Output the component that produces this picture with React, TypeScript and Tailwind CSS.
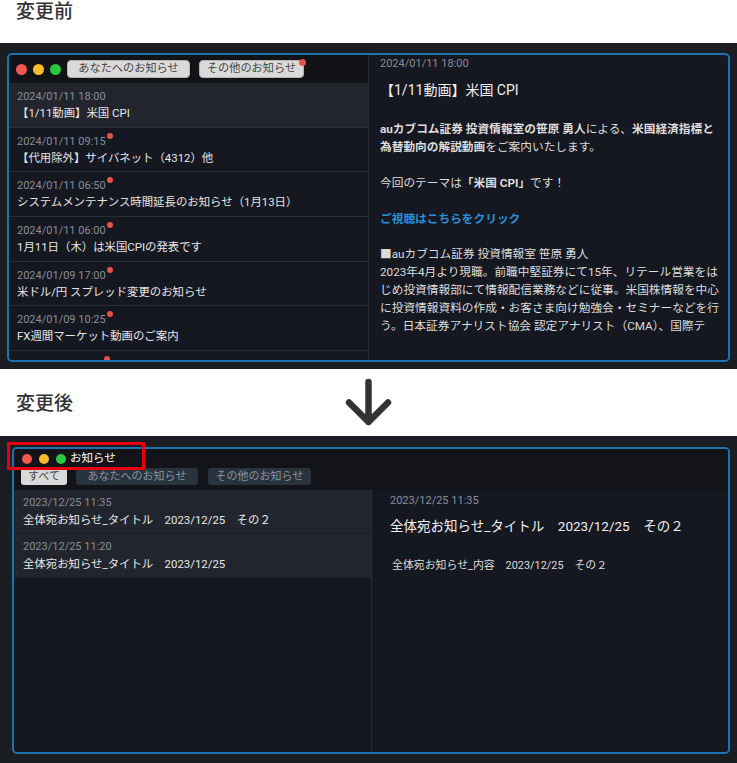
const list1 = [
  { d: "2024/01/11 18:00", t: "【1/11動画】米国 CPI", dot: false, sel: true },
  { d: "2024/01/11 09:15", t: "【代用除外】サイバネット（4312）他", dot: true },
  { d: "2024/01/11 06:50", t: "システムメンテナンス時間延長のお知らせ（1月13日）", dot: true },
  { d: "2024/01/11 06:00", t: "1月11日（木）は米国CPIの発表です", dot: true },
  { d: "2024/01/09 17:00", t: "米ドル/円 スプレッド変更のお知らせ", dot: true },
  { d: "2024/01/09 10:25", t: "FX週間マーケット動画のご案内", dot: true },
  { d: "", t: "", dot: true },
];

const list2 = [
  { d: "2023/12/25 11:35", t: "全体宛お知らせ_タイトル　2023/12/25　その２" },
  { d: "2023/12/25 11:20", t: "全体宛お知らせ_タイトル　2023/12/25" },
];

function Lights({ size, gap }: { size: string; gap: string }) {
  return (
    <div className={`flex items-center ${gap}`}>
      <span className={`${size} rounded-full bg-[#f0574f]`} />
      <span className={`${size} rounded-full bg-[#f7bb2c]`} />
      <span className={`${size} rounded-full bg-[#2ac840]`} />
    </div>
  );
}

export default function App() {
  return (
    <div className="w-[737px] h-[763px] overflow-hidden bg-white [font-family:Roboto,'Noto_Sans_CJK_JP',sans-serif]">
      {/* heading 1 */}
      <div className="h-[43px] pl-4">
        <div className="text-[19px] leading-[24px] font-medium text-[#333]">変更前</div>
      </div>

      {/* band 1 */}
      <div className="h-[326px] bg-[#1a1e23] px-[7px] pt-[10px]">
        <div className="flex h-[309px] rounded-[5px] border-2 border-[#1f72b0] bg-[#161821] overflow-hidden">
          {/* left column */}
          <div className="w-[360px] shrink-0 flex flex-col border-r border-[#2a2e37]">
            <div className="h-[28px] shrink-0 bg-[#121317] flex items-center pl-[7px]">
              <Lights size="w-[11px] h-[11px]" gap="gap-[6px]" />
              <div className="ml-[6px] flex items-center gap-[9px]">
                <div className="w-[123px] h-[18px] rounded-[4px] bg-[#dadada] border border-[#b5b5b5] flex items-center justify-center text-[11.2px] text-[#444] leading-none">
                  あなたへのお知らせ
                </div>
                <div className="relative w-[105px] h-[18px] rounded-[4px] bg-[#dadada] border border-[#b5b5b5] flex items-center justify-center text-[11.2px] text-[#444] leading-none">
                  その他のお知らせ
                  <span className="absolute -top-[2.5px] -right-[2.5px] w-[7px] h-[7px] rounded-full bg-[#e5534b]" />
                </div>
              </div>
            </div>
            <div className="flex-1 overflow-hidden">
              {list1.map((r, i) => (
                <div
                  key={i}
                  className={`h-[44.67px] pl-2 pt-[6px] border-b border-[#2a2e37] ${r.sel ? "bg-[#22252d]" : ""}`}
                >
                  <div className="h-[16px] leading-[16px] text-[11px] text-[#878d97] flex items-start">
                    {r.d ? <span>{r.d}</span> : <span className="w-[86px]" />}
                    {r.dot && <span className="ml-[1px] mt-[-1px] w-[6px] h-[6px] rounded-full bg-[#e5534b]" />}
                  </div>
                  <div className="h-[16px] leading-[16px] text-[11.4px] text-[#e6e6e6] whitespace-nowrap">{r.t}</div>
                </div>
              ))}
            </div>
          </div>
          {/* right column */}
          <div className="flex-1 pl-[11px] pr-3 overflow-hidden text-[#dcdcdc]">
            <div className="h-[18px] leading-[18px] text-[11px] text-[#878d97]">2024/01/11 18:00</div>
            <div className="mt-[7px] h-[20px] leading-[20px] text-[14px] text-[#eeeeee]">【1/11動画】米国 CPI</div>
            <div className="mt-[21px] text-[11.7px] leading-[17.9px] whitespace-nowrap">
              <div>
                <b className="font-bold">auカブコム証券 投資情報室の笹原 勇人</b>による、<b className="font-bold">米国経済指標と</b>
              </div>
              <div>
                <b className="font-bold">為替動向の解説動画</b>をご案内いたします。
              </div>
              <div>&nbsp;</div>
              <div>
                今回のテーマは<b className="font-bold">「米国 CPI」</b>です！
              </div>
              <div>&nbsp;</div>
              <div className="font-bold text-[#2a8fd8]">ご視聴はこちらをクリック</div>
              <div>&nbsp;</div>
              <div>■auカブコム証券 投資情報室 笹原 勇人</div>
              <div>2023年4月より現職。前職中堅証券にて15年、リテール営業をは</div>
              <div>じめ投資情報部にて情報配信業務などに従事。米国株情報を中心</div>
              <div>に投資情報資料の作成・お客さま向け勉強会・セミナーなどを行</div>
              <div>う。日本証券アナリスト協会 認定アナリスト（CMA）、国際テ</div>
            </div>
          </div>
        </div>
      </div>

      {/* middle */}
      <div className="h-[67px] bg-white grid grid-cols-[1fr_48px_1fr]">
        <div className="pl-4 pt-[23px]">
          <div className="text-[19px] leading-[24px] font-medium text-[#333]">変更後</div>
        </div>
        <div className="pt-[9px]">
          <svg width="48" height="50" viewBox="0 0 48 50" fill="none">
            <path
              d="M23.5 4 V44 M4 24.5 L23.5 44 L43 24.5"
              stroke="#333"
              strokeWidth="6.5"
              strokeLinecap="round"
              strokeLinejoin="round"
            />
          </svg>
        </div>
        <div />
      </div>

      {/* band 2 */}
      <div className="relative h-[327px] bg-[#1a1e23] pl-[12px] pr-[7px] pt-[11px]">
        <div className="flex flex-col h-[307px] rounded-[5px] border-2 border-[#1f72b0] bg-[#161821] overflow-hidden">
          <div className="shrink-0 bg-[#131419] pb-[5px]">
            <div className="h-[19px] flex items-center pl-[8px]">
              <Lights size="w-[10px] h-[10px]" gap="gap-[7px]" />
              <span className="ml-[4px] text-[11.5px] leading-none text-white">お知らせ</span>
            </div>
            <div className="h-[17px] flex items-center pl-[7px] gap-[9px]">
              <div className="w-[46px] h-[17px] rounded-[3px] bg-[#d9d9d9] flex items-center justify-center text-[11px] text-[#444] leading-none">
                すべて
              </div>
              <div className="w-[122px] h-[17px] rounded-[3px] bg-[#29333e] flex items-center justify-center text-[11px] text-[#8a939e] leading-none">
                あなたへのお知らせ
              </div>
              <div className="ml-[1px] w-[103px] h-[17px] rounded-[3px] bg-[#29333e] flex items-center justify-center text-[11px] text-[#8a939e] leading-none">
                その他のお知らせ
              </div>
            </div>
          </div>
          <div className="flex flex-1">
            <div className="w-[358px] shrink-0 border-r border-[#2a2e37]">
              {list2.map((r, i) => (
                <div key={i} className="h-[44px] pl-[9px] pt-[5px] bg-[#22252d] border-b border-[#1b1d24]">
                  <div className="h-[16px] leading-[16px] text-[11px] text-[#878d97]">{r.d}</div>
                  <div className="h-[18px] leading-[18px] text-[11.4px] text-[#e8e8e8] whitespace-nowrap">{r.t}</div>
                </div>
              ))}
            </div>
            <div className="flex-1 pl-[18px] pt-[3px]">
              <div className="h-[16px] leading-[16px] text-[11px] text-[#878d97]">2023/12/25 11:35</div>
              <div className="mt-[7px] h-[20px] leading-[20px] text-[13.5px] text-[#eeeeee] whitespace-nowrap">
                全体宛お知らせ_タイトル　2023/12/25　その２
              </div>
              <div className="mt-[22px] ml-[2px] h-[16px] leading-[16px] text-[10.9px] text-[#dcdcdc] whitespace-nowrap">
                全体宛お知らせ_内容　2023/12/25　その２
              </div>
            </div>
          </div>
        </div>
        {/* annotation highlight */}
        <div className="absolute left-[7px] top-[6px] w-[138px] h-[28px] border-[3px] border-[#e60012]" />
      </div>
    </div>
  );
}
